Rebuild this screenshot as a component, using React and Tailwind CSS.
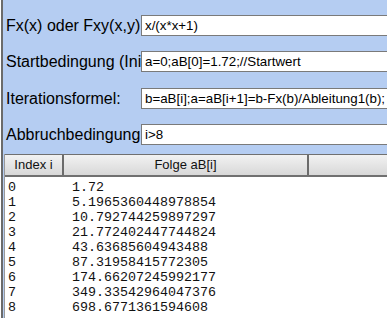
import React from 'react';

const FIELDS = [
  { label: 'Fx(x) oder Fxy(x,y):', value: 'x/(x*x+1)', mt: 'mt-0' },
  { label: 'Startbedingung (Initialisierung):', value: 'a=0;aB[0]=1.72;//Startwert', mt: 'mt-[15px]' },
  { label: 'Iterationsformel:', value: 'b=aB[i];a=aB[i+1]=b-Fx(b)/Ableitung1(b);', mt: 'mt-[16px]' },
  { label: 'Abbruchbedingung:', value: 'i>8', mt: 'mt-[15px]' },
];

const ROWS = [
  ['0', '1.72'],
  ['1', '5.1965360448978854'],
  ['2', '10.792744259897297'],
  ['3', '21.772402447744824'],
  ['4', '43.63685604943488'],
  ['5', '87.31958415772305'],
  ['6', '174.66207245992177'],
  ['7', '349.33542964047376'],
  ['8', '698.6771361594608'],
];

const FieldRow = ({ label, value, mt }) => (
  <div className={`flex items-center h-[21px] ${mt}`}>
    <div className="w-[138px] shrink-0 overflow-hidden whitespace-nowrap pl-[3px] text-[16px] text-black leading-none">
      {label}
    </div>
    <div className="w-[270px] shrink-0 h-[21px] bg-white border border-[#7a7a7a] flex items-center pl-[3px] text-[13.33px] text-black whitespace-nowrap overflow-hidden">
      {value}
    </div>
  </div>
);

export default function App() {
  return (
    <div
      className="w-[387px] h-[318px] overflow-hidden bg-white pl-px"
      style={{ fontFamily: '"Liberation Sans", Arial, sans-serif' }}
    >
      <div className="h-full border-l-2 border-[#6b6b6b] bg-[#b5cdf2] flex flex-col pt-[15px] overflow-hidden">
        {FIELDS.map((f) => (
          <FieldRow key={f.label} {...f} />
        ))}

        {/* Ergebnistabelle */}
        <div className="mt-[9px] ml-px flex-1 flex flex-col border-l border-[#9a9a9a] overflow-hidden">
          <div className="flex h-[23px] border-t border-b-2 border-[#707070] bg-gradient-to-b from-[#f2f2f2] to-[#d8d8d8] text-[13px] text-[#111]">
            <div className="w-[57px] shrink-0 flex items-center justify-center">Index i</div>
            <div className="w-[245px] shrink-0 border-l-2 border-[#6b6b6b] flex items-center justify-center">Folge aB[i]</div>
            <div className="flex-1 border-l-2 border-[#6b6b6b]"></div>
          </div>
          <div
            className="flex-1 bg-white pt-[3px] pl-[3px] text-[13.33px] leading-[15px] text-[#111]"
            style={{ fontFamily: '"Liberation Mono", "Courier New", monospace' }}
          >
            {ROWS.map(([i, v]) => (
              <div key={i} className="flex whitespace-pre">
                <span className="w-[64px] shrink-0">{i}</span>
                <span>{v}</span>
              </div>
            ))}
          </div>
        </div>
      </div>
    </div>
  );
}
